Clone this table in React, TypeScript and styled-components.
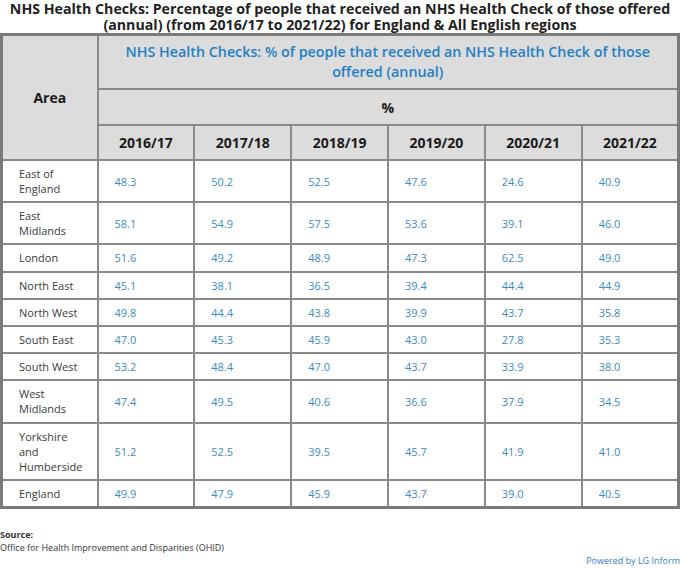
import React from "react";
import styled, { createGlobalStyle } from "styled-components";

const Global = createGlobalStyle`
  html, body { margin: 0; padding: 0; background: #fff; }
  body { font-family: "Open Sans", "Noto Sans", Arial, sans-serif; color: #333; }
`;

const Page = styled.div`
  width: 680px;
  box-sizing: border-box;
`;

const Title = styled.h1`
  margin: 0;
  padding: 1px 4px 0;
  height: 32px;
  font-size: 14.2px;
  line-height: 16px;
  font-weight: 700;
  color: #222;
  text-align: center;
`;

const Table = styled.table`
  width: 680px;
  border-collapse: collapse;
  table-layout: fixed;
  border: 3px solid #7a7a7a;
`;

const HeadCell = styled.th`
  background: #dcdcdc;
  border: 2px solid #8a8a8a;
  font-weight: 700;
  font-size: 14px;
  line-height: 19px;
  color: #1a1a1a;
  text-align: center;
  padding: 7px 6px;
`;

const BlueHead = styled(HeadCell)`
  color: #1f7fc4;
  font-weight: 600;
  font-size: 14.3px;
  line-height: 20px;
  padding: 6px 16px;
`;

const UnitHead = styled(HeadCell)`
  padding: 8px 6px 7px;
`;

const AreaCell = styled.td`
  border: 2px solid #8a8a8a;
  font-size: 11px;
  line-height: 15px;
  color: #3a3a3a;
  padding: 5.1px 14px 5.1px 16px;
  vertical-align: middle;
`;

const ValueCell = styled.td`
  border: 2px solid #8a8a8a;
  font-size: 11px;
  line-height: 15px;
  color: #3b8bc6;
  padding: 5.1px 16px;
  vertical-align: middle;
`;

const Footer = styled.div`
  margin-top: 19px;
  font-size: 9px;
  line-height: 13px;
  color: #333;
`;

const SourceLabel = styled.div`
  font-weight: 700;
`;

const Powered = styled.div`
  text-align: right;
  color: #2f7fc1;
  font-size: 9px;
  line-height: 13px;
`;

const years = ["2016/17", "2017/18", "2018/19", "2019/20", "2020/21", "2021/22"];

const rows: [string, string[]][] = [
  ["East of England", ["48.3", "50.2", "52.5", "47.6", "24.6", "40.9"]],
  ["East Midlands", ["58.1", "54.9", "57.5", "53.6", "39.1", "46.0"]],
  ["London", ["51.6", "49.2", "48.9", "47.3", "62.5", "49.0"]],
  ["North East", ["45.1", "38.1", "36.5", "39.4", "44.4", "44.9"]],
  ["North West", ["49.8", "44.4", "43.8", "39.9", "43.7", "35.8"]],
  ["South East", ["47.0", "45.3", "45.9", "43.0", "27.8", "35.3"]],
  ["South West", ["53.2", "48.4", "47.0", "43.7", "33.9", "38.0"]],
  ["West Midlands", ["47.4", "49.5", "40.6", "36.6", "37.9", "34.5"]],
  ["Yorkshire and Humberside", ["51.2", "52.5", "39.5", "45.7", "41.9", "41.0"]],
  ["England", ["49.9", "47.9", "45.9", "43.7", "39.0", "40.5"]],
];

export default function App() {
  return (
    <Page>
      <Global />
      <Title>
        NHS Health Checks: Percentage of people that received an NHS Health Check of those offered
        (annual) (from 2016/17 to 2021/22) for England &amp; All English regions
      </Title>
      <Table>
        <colgroup>
          <col style={{ width: 96 }} />
          {years.map((y) => (
            <col key={y} />
          ))}
        </colgroup>
        <thead>
          <tr>
            <HeadCell rowSpan={3}>Area</HeadCell>
            <BlueHead colSpan={6}>
              NHS Health Checks: % of people that received an NHS Health Check of those offered
              (annual)
            </BlueHead>
          </tr>
          <tr>
            <UnitHead colSpan={6}>%</UnitHead>
          </tr>
          <tr>
            {years.map((y) => (
              <HeadCell key={y}>{y}</HeadCell>
            ))}
          </tr>
        </thead>
        <tbody>
          {rows.map(([area, vals]) => (
            <tr key={area}>
              <AreaCell>{area}</AreaCell>
              {vals.map((v, i) => (
                <ValueCell key={i}>{v}</ValueCell>
              ))}
            </tr>
          ))}
        </tbody>
      </Table>
      <Footer>
        <SourceLabel>Source:</SourceLabel>
        <div>Office for Health Improvement and Disparities (OHID)</div>
        <Powered>Powered by LG Inform</Powered>
      </Footer>
    </Page>
  );
}
